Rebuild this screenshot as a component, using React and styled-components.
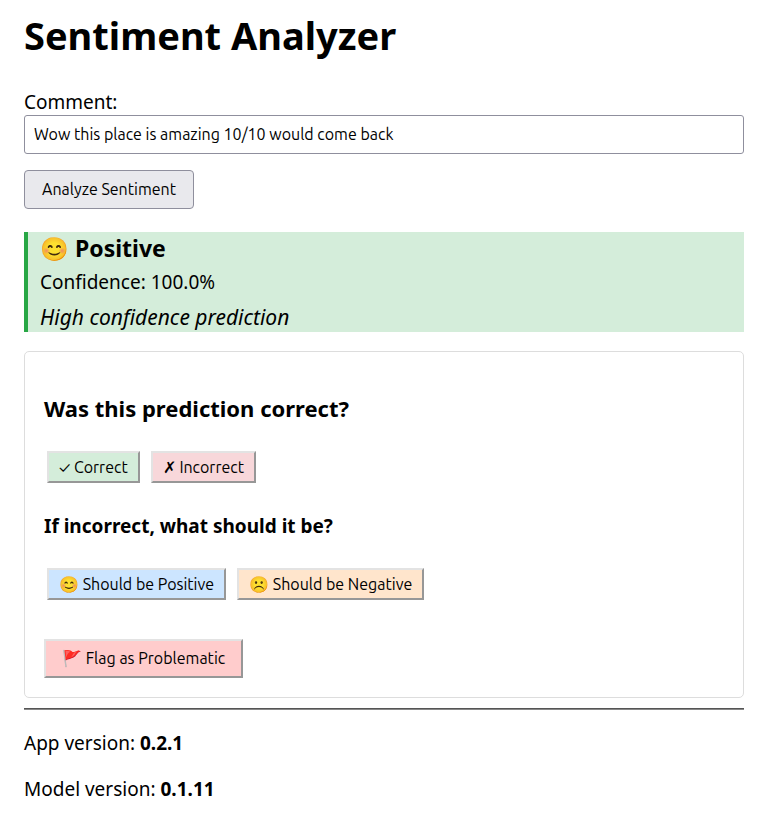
import React, { useState } from "react";
import styled, { createGlobalStyle } from "styled-components";

const GlobalStyle = createGlobalStyle`
  *, *::before, *::after { box-sizing: border-box; }
  body {
    margin: 0;
    background: #fff;
    color: #000;
    font-family: "Noto Sans", sans-serif;
    font-size: 19px;
    line-height: 26px;
  }
`;

const Page = styled.main`
  padding: 10px 33px 24px 24px;
`;

const Title = styled.h1`
  margin: 0 0 29px;
  font-size: 38px;
  line-height: 50px;
`;

const Form = styled.form`
  display: flex;
  flex-direction: column;
  align-items: flex-start;
`;

const CommentInput = styled.input`
  width: 100%;
  margin-bottom: 16px;
  padding: 8px 9px 9px;
  border: 1px solid #8f8f9d;
  border-radius: 3px;
  background: #fff;
  color: #000;
  font: 16px/20px Ubuntu, "Noto Sans", sans-serif;
`;

const SubmitButton = styled.button`
  padding: 8px 17px;
  border: 1px solid #8f8f9d;
  border-radius: 4px;
  background: #e9e9ed;
  color: #000;
  font: 16px/21px Ubuntu, "Noto Sans", sans-serif;
`;

const Result = styled.section`
  margin: 23px 0 19px;
  padding: 0 12px;
  border-left: 4px solid #28a745;
  background: #d4edda;
`;

const Sentiment = styled.h2`
  margin: 0;
  font-size: 23px;
  line-height: 33px;
`;

const Confidence = styled.p`
  margin: 0;
  line-height: 34px;
`;

const Note = styled.p`
  margin: 4px 0 0;
  font-size: 21px;
  font-style: italic;
  line-height: 29px;
`;

const Feedback = styled.section`
  padding: 19px;
  border: 1px solid #ddd;
  border-radius: 5px;
`;

const Question = styled.h3`
  margin: 22px 0 27px;
  font-size: 22px;
  line-height: 31px;
`;

const FollowUp = styled.h4`
  margin: 30px 0 29px;
  line-height: 26px;
`;

const ButtonRow = styled.div`
  display: flex;
  flex-wrap: wrap;
  gap: 11px;
  padding: 0 3px;
`;

const FeedbackButton = styled.button`
  padding: ${(p) => (p.$large ? "8px 16px" : "5px 10px")};
  border: 2px solid;
  border-color: #e3e3e3 #979797 #979797 #e3e3e3;
  background: ${(p) => p.$color};
  color: #000;
  font: 16px/18px Ubuntu, "Noto Sans", sans-serif;
  line-height: ${(p) => (p.$large ? "19px" : "18px")};
`;

const FlagRow = styled.div`
  display: flex;
  margin-top: 39px;
`;

const Divider = styled.hr`
  margin: 10px 0 20px;
  border: 0;
  border-top: 1px solid #555;
  border-bottom: 1px solid #888;
`;

const Version = styled.p`
  margin: 0 0 20px;
`;

export default function App() {
  const [comment, setComment] = useState(
    "Wow this place is amazing 10/10 would come back"
  );
  return (
    <Page>
      <GlobalStyle />
      <Title>Sentiment Analyzer</Title>
      <Form onSubmit={(e) => e.preventDefault()}>
        <label htmlFor="comment">Comment:</label>
        <CommentInput
          id="comment"
          type="text"
          value={comment}
          onChange={(e) => setComment(e.target.value)}
        />
        <SubmitButton type="submit">Analyze Sentiment</SubmitButton>
      </Form>
      <Result>
        <Sentiment>😊 Positive</Sentiment>
        <Confidence>Confidence: 100.0%</Confidence>
        <Note>High confidence prediction</Note>
      </Result>
      <Feedback>
        <Question>Was this prediction correct?</Question>
        <ButtonRow>
          <FeedbackButton type="button" $color="#d4edda">✓ Correct</FeedbackButton>
          <FeedbackButton type="button" $color="#f8d7da">✗ Incorrect</FeedbackButton>
        </ButtonRow>
        <FollowUp>If incorrect, what should it be?</FollowUp>
        <ButtonRow>
          <FeedbackButton type="button" $color="#cce5ff">😊 Should be Positive</FeedbackButton>
          <FeedbackButton type="button" $color="#ffe5cc">☹️ Should be Negative</FeedbackButton>
        </ButtonRow>
        <FlagRow>
          <FeedbackButton type="button" $large $color="#ffcccc">🚩 Flag as Problematic</FeedbackButton>
        </FlagRow>
      </Feedback>
      <Divider />
      <Version>App version: <strong>0.2.1</strong></Version>
      <Version>Model version: <strong>0.1.11</strong></Version>
    </Page>
  );
}
